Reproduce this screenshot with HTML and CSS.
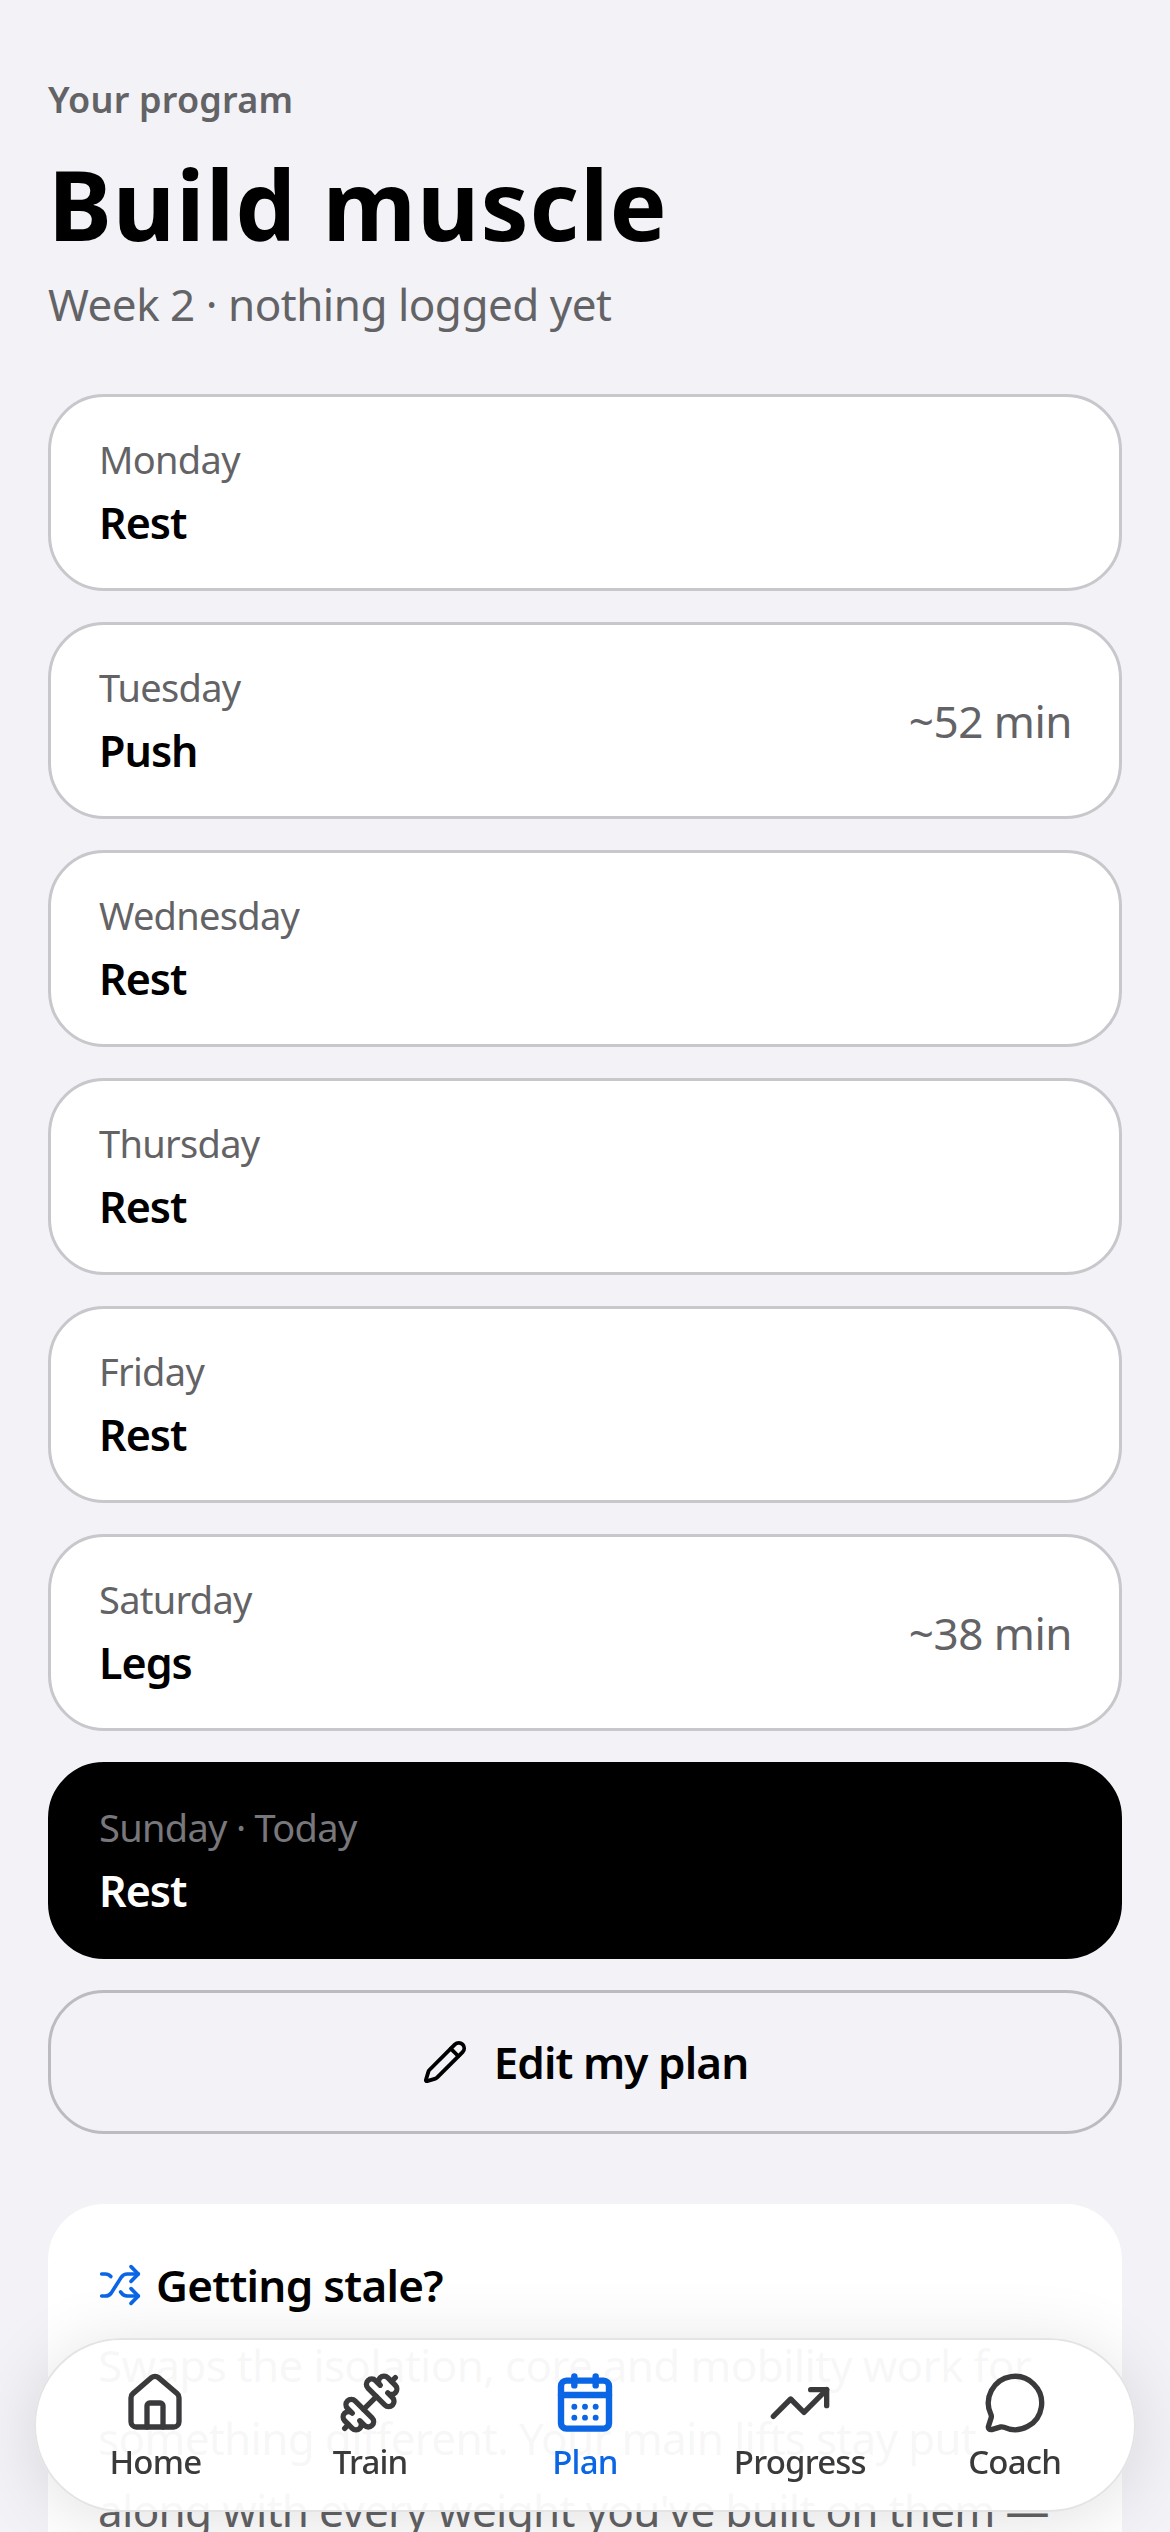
FILE: index.html
```html
<!DOCTYPE html>
<html lang="en">
<head>
    <meta charset="UTF-8">
    <meta name="viewport" content="width=device-width, initial-scale=1.0">
    <title>Your program</title>
    <link rel="stylesheet" href="styles.css">
</head>
<body>
    <main class="page">
        <p class="eyebrow">Your program</p>
        <h1>Build muscle</h1>
        <p class="subtitle">Week 2 · nothing logged yet</p>

        <div class="days">
            <div class="day">
                <div><div class="day-name">Monday</div><div class="day-title">Rest</div></div>
            </div>
            <div class="day">
                <div><div class="day-name">Tuesday</div><div class="day-title">Push</div></div>
                <div class="day-time">~52 min</div>
            </div>
            <div class="day">
                <div><div class="day-name">Wednesday</div><div class="day-title">Rest</div></div>
            </div>
            <div class="day">
                <div><div class="day-name">Thursday</div><div class="day-title">Rest</div></div>
            </div>
            <div class="day">
                <div><div class="day-name">Friday</div><div class="day-title">Rest</div></div>
            </div>
            <div class="day">
                <div><div class="day-name">Saturday</div><div class="day-title">Legs</div></div>
                <div class="day-time">~38 min</div>
            </div>
            <div class="day day-today">
                <div><div class="day-name">Sunday · Today</div><div class="day-title">Rest</div></div>
            </div>
        </div>

        <button class="edit-btn">
            <svg class="edit-icon" viewBox="0 0 24 24"><path d="M21.174 6.812a1 1 0 0 0-3.986-3.987L3.842 16.174a2 2 0 0 0-.5.83l-1.321 4.352a.5.5 0 0 0 .623.622l4.353-1.32a2 2 0 0 0 .83-.497z"/><path d="m15 5 4 4"/></svg>
            Edit my plan
        </button>

        <section class="stale">
            <h2>
                <svg class="stale-icon" viewBox="0 0 24 24"><path d="m18 14 4 4-4 4"/><path d="m18 2 4 4-4 4"/><path d="M2 18h1.973a4 4 0 0 0 3.3-1.7l5.454-8.6a4 4 0 0 1 3.3-1.7H22"/><path d="M2 6h1.972a4 4 0 0 1 3.033 1.388"/><path d="M22 18h-6.041a4 4 0 0 1-3.3-1.8l-.359-.45"/></svg>
                Getting stale?
            </h2>
            <p>Swaps the isolation, core and mobility work for<br>something different. Your main lifts stay put,<br>along with every weight you've built on them —</p>
        </section>
    </main>

    <nav class="tabbar">
        <a class="tab">
            <svg viewBox="0 0 24 24"><path d="M3 10a2 2 0 0 1 .709-1.528l7-6a2 2 0 0 1 2.582 0l7 6A2 2 0 0 1 21 10v9a2 2 0 0 1-2 2H5a2 2 0 0 1-2-2z"/><path d="M15 21v-8a1 1 0 0 0-1-1h-4a1 1 0 0 0-1 1v8"/></svg>
            Home
        </a>
        <a class="tab">
            <svg viewBox="0 0 24 24"><path d="M17.596 12.768a2 2 0 1 0 2.829-2.829l-1.768-1.767a2 2 0 0 0 2.828-2.829l-2.828-2.828a2 2 0 0 0-2.829 2.828l-1.767-1.768a2 2 0 1 0-2.829 2.829z"/><path d="m2.5 21.5 1.4-1.4"/><path d="m20.1 3.9 1.4-1.4"/><path d="M5.343 21.485a2 2 0 1 0 2.829-2.828l1.767 1.768a2 2 0 1 0 2.829-2.829l-6.364-6.364a2 2 0 1 0-2.829 2.829l1.768 1.767a2 2 0 0 0-2.828 2.829z"/><path d="m9.6 14.4 4.8-4.8"/></svg>
            Train
        </a>
        <a class="tab tab-active">
            <svg viewBox="0 0 24 24"><rect x="3" y="3.6" width="18" height="18" rx="2"/><path d="M3 9h18"/><path d="M8 2v3.4"/><path d="M16 2v3.4"/><g class="cal-dots"><circle cx="8" cy="13.4" r="1.1"/><circle cx="12" cy="13.4" r="1.1"/><circle cx="16" cy="13.4" r="1.1"/><circle cx="8" cy="17.5" r="1.1"/><circle cx="12" cy="17.5" r="1.1"/><circle cx="16" cy="17.5" r="1.1"/></g></svg>
            Plan
        </a>
        <a class="tab">
            <svg viewBox="0 0 24 24"><path d="M16 7h6v6"/><path d="m22 7-8.5 8.5-5-5L2 17"/></svg>
            Progress
        </a>
        <a class="tab">
            <svg viewBox="0 0 24 24"><path d="M2.992 16.342a2 2 0 0 1 .094 1.167l-1.065 3.29a1 1 0 0 0 1.236 1.168l3.413-.998a2 2 0 0 1 1.099.092 10 10 0 1 0-4.777-4.719"/></svg>
            Coach
        </a>
    </nav>
</body>
</html>
```

FILE: styles.css
```css
* {
    box-sizing: border-box;
    margin: 0;
    padding: 0;
}

html, body {
    height: 2532px;
    overflow: hidden;
}

body {
    background-color: #f2f2f7;
    font-family: "Noto Sans", sans-serif;
    color: #000;
}

svg {
    fill: none;
    stroke: currentColor;
    stroke-width: 2;
    stroke-linecap: round;
    stroke-linejoin: round;
}

.page {
    padding: 72px 48px 0;
}

.eyebrow {
    font-size: 36px;
    line-height: 56px;
    font-weight: 600;
    color: #636366;
    letter-spacing: 0.2px;
}

h1 {
    font-size: 96px;
    line-height: 128px;
    font-weight: 700;
    margin-top: 12px;
    letter-spacing: 0.9px;
}

.subtitle {
    font-size: 44px;
    line-height: 60px;
    color: #636366;
    margin-top: 6px;
    letter-spacing: -0.5px;
}

.days {
    display: flex;
    flex-direction: column;
    gap: 31px;
    margin-top: 60px;
}

.day {
    display: flex;
    justify-content: space-between;
    align-items: center;
    height: 197px;
    padding: 0 47px 0 48px;
    background-color: #fff;
    border: 3px solid #c7c7cc;
    border-radius: 56px;
}

.day-name {
    font-size: 38px;
    line-height: 52px;
    color: #636366;
    letter-spacing: -0.7px;
}

.day-title {
    font-size: 43px;
    line-height: 60px;
    font-weight: 600;
    margin-top: 8px;
    letter-spacing: -1px;
}

.day-time {
    font-size: 44px;
    color: #636366;
    letter-spacing: -0.5px;
}

.day-today {
    background-color: #000;
    border-color: #000;
}

.day-today .day-name {
    color: #77777c;
}

.day-today .day-title {
    color: #fff;
}

.edit-btn {
    display: flex;
    justify-content: center;
    align-items: center;
    gap: 26px;
    width: 100%;
    height: 144px;
    margin-top: 31px;
    background: none;
    border: 3px solid #bcbcc0;
    border-radius: 56px;
    font-family: inherit;
    font-size: 44px;
    font-weight: 600;
    color: #000;
    letter-spacing: -0.9px;
}

.edit-icon {
    width: 46px;
    height: 46px;
}

.stale {
    margin-top: 70px;
    padding: 50px 50px 0;
    height: 500px;
    background-color: #fff;
    border-radius: 56px;
}

.stale h2 {
    display: flex;
    align-items: center;
    gap: 14px;
    font-size: 44px;
    line-height: 62px;
    font-weight: 600;
    letter-spacing: -0.7px;
}

.stale-icon {
    width: 44px;
    height: 44px;
    color: #0a66e4;
}

.stale p {
    margin-top: 13px;
    font-size: 44px;
    line-height: 72.5px;
    color: #636366;
    letter-spacing: -0.7px;
}

.tabbar {
    position: fixed;
    left: 34px;
    top: 2338px;
    display: grid;
    grid-template-columns: repeat(5, 1fr);
    width: 1102px;
    height: 174px;
    padding: 31px 12px 0;
    background-color: rgba(255, 255, 255, 0.95);
    border: 2px solid #e4e4e6;
    border-radius: 87px;
    box-shadow: 0 8px 70px rgba(0, 0, 0, 0.12);
}

.tab {
    display: flex;
    flex-direction: column;
    align-items: center;
    font-size: 33px;
    line-height: 46px;
    font-weight: 500;
    color: #3a3a3c;
    letter-spacing: -0.8px;
}

.tab svg {
    width: 64px;
    height: 64px;
    margin-bottom: 4px;
}

.tab-active {
    color: #0a66e4;
}

.tab-active svg {
    stroke-width: 2.4;
}

.cal-dots circle {
    fill: currentColor;
    stroke: none;
}
```
